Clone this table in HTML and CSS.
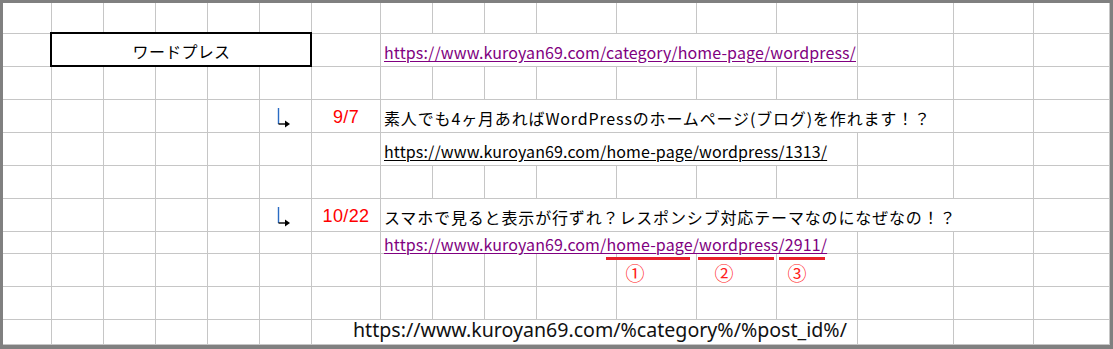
FILE: index.html
```html
<!DOCTYPE html>
<html lang="ja">
<head>
<meta charset="utf-8">
<title>ワードプレス</title>
<link rel="stylesheet" href="styles.css">
</head>
<body>
<div class="sheet">
  <div class="grid">
    <!-- row 1 -->
    <div class="c"></div><div class="c"></div><div class="c"></div><div class="c"></div><div class="c"></div><div class="c"></div><div class="c"></div><div class="c"></div><div class="c"></div><div class="c"></div><div class="c"></div><div class="c"></div><div class="c"></div><div class="c"></div><div class="c"></div><div class="c"></div><div class="c"></div>
    <!-- row 2 -->
    <div class="c"></div>
    <div class="c s5 box"><span>ワードプレス</span></div>
    <div class="c"></div>
    <div class="c s7 txt"><span class="url visited">https://www.kuroyan69.com/category/home-page/wordpress/</span></div>
    <div class="c"></div><div class="c"></div><div class="c"></div>
    <!-- row 3 -->
    <div class="c"></div><div class="c"></div><div class="c"></div><div class="c"></div><div class="c"></div><div class="c"></div><div class="c"></div><div class="c"></div><div class="c"></div><div class="c"></div><div class="c"></div><div class="c"></div><div class="c"></div><div class="c"></div><div class="c"></div><div class="c"></div><div class="c"></div>
    <!-- row 4 -->
    <div class="c"></div><div class="c"></div><div class="c"></div><div class="c"></div><div class="c"></div>
    <div class="c arrow"><svg width="16" height="20" viewBox="0 0 16 20"><path d="M1.5 0V16" stroke="#2a6cc4" stroke-width="1.4" fill="none"/><path d="M1.5 16H11" stroke="#000" stroke-width="1.4" fill="none"/><path d="M8 12.5L13 16L8 19.5Z" fill="#000"/></svg></div>
    <div class="c date">9/7</div>
    <div class="c s8 txt"><span class="jp">素人でも4ヶ月あればWordPressのホームページ(ブログ)を作れます！？</span></div>
    <div class="c"></div><div class="c"></div>
    <!-- row 5 -->
    <div class="c"></div><div class="c"></div><div class="c"></div><div class="c"></div><div class="c"></div><div class="c"></div><div class="c"></div>
    <div class="c s7 txt"><span class="url">https://www.kuroyan69.com/home-page/wordpress/1313/</span></div>
    <div class="c"></div><div class="c"></div><div class="c"></div>
    <!-- row 6 -->
    <div class="c"></div><div class="c"></div><div class="c"></div><div class="c"></div><div class="c"></div><div class="c"></div><div class="c"></div><div class="c"></div><div class="c"></div><div class="c"></div><div class="c"></div><div class="c"></div><div class="c"></div><div class="c"></div><div class="c"></div><div class="c"></div><div class="c"></div>
    <!-- row 7 -->
    <div class="c"></div><div class="c"></div><div class="c"></div><div class="c"></div><div class="c"></div>
    <div class="c arrow"><svg width="16" height="20" viewBox="0 0 16 20"><path d="M1.5 0V16" stroke="#2a6cc4" stroke-width="1.4" fill="none"/><path d="M1.5 16H11" stroke="#000" stroke-width="1.4" fill="none"/><path d="M8 12.5L13 16L8 19.5Z" fill="#000"/></svg></div>
    <div class="c date">10/22</div>
    <div class="c s9 txt"><span class="jp">スマホで見ると表示が行ずれ？レスポンシブ対応テーマなのになぜなの！？</span></div>
    <div class="c"></div>
    <!-- row 8 -->
    <div class="c"></div><div class="c"></div><div class="c"></div><div class="c"></div><div class="c"></div><div class="c"></div><div class="c"></div>
    <div class="c s7 txt"><span class="url visited">https://www.kuroyan69.com/home-page/wordpress/2911/</span></div>
    <div class="c"></div><div class="c"></div><div class="c"></div>
    <!-- row 9 -->
    <div class="c"></div><div class="c"></div><div class="c"></div><div class="c"></div><div class="c"></div><div class="c"></div><div class="c"></div><div class="c"></div><div class="c"></div><div class="c"></div><div class="c"></div><div class="c"></div><div class="c"></div><div class="c"></div><div class="c"></div><div class="c"></div><div class="c"></div>
    <!-- row 10 -->
    <div class="c"></div><div class="c"></div><div class="c"></div><div class="c"></div><div class="c"></div><div class="c"></div><div class="c"></div><div class="c"></div><div class="c"></div><div class="c"></div><div class="c"></div><div class="c"></div><div class="c"></div><div class="c"></div><div class="c"></div><div class="c"></div><div class="c"></div>
    <!-- row 11 -->
    <div class="c"></div><div class="c"></div><div class="c"></div><div class="c"></div><div class="c"></div><div class="c"></div>
    <div class="c s8 bottom"><span>https://www.kuroyan69.com/%category%/%post_id%/</span></div>
    <div class="c"></div><div class="c"></div><div class="c"></div>
  </div>

  <div class="mark bar1"></div>
  <div class="mark bar2"></div>
  <div class="mark bar3"></div>
  <div class="num n1">①</div>
  <div class="num n2">②</div>
  <div class="num n3">③</div>
  <div class="select-edge"></div>
</div>
</body>
</html>
```

FILE: styles.css
```css
* { box-sizing: border-box; }

html, body {
  margin: 0;
  padding: 0;
  background: #ffffff;
}

.sheet {
  position: relative;
  width: 1113px;
  height: 349px;
  border-style: solid;
  border-color: #808080;
  border-width: 3px 3px 4px 3px;
  overflow: hidden;
  font-family: "Noto Sans CJK JP", sans-serif;
  font-size: 16px;
  color: #000;
}

.grid {
  display: grid;
  grid-template-columns: 49px 52px 52px 52px 52px 52px 69px 52px 52px 52px 80px 80px 80px 81px 96px 80px 76px;
  grid-template-rows: 31px 33px 33px 33px 33px 33px 33px 22px 33px 33px 25px;
}

.c {
  border-right: 1px solid #c6c6c6;
  border-bottom: 1px solid #c6c6c6;
  min-width: 0;
  display: flex;
  align-items: center;
  white-space: nowrap;
}

.s5 { grid-column: span 5; }
.s7 { grid-column: span 7; }
.s8 { grid-column: span 8; }
.s9 { grid-column: span 9; }

.box {
  position: relative;
  justify-content: center;
  padding-top: 2px;
  letter-spacing: 0.3px;
}
.box::after {
  content: "";
  position: absolute;
  top: -2px;
  left: -2px;
  right: -1px;
  bottom: -1px;
  border: 2px solid #000;
}

.txt {
  padding-left: 3px;
  padding-top: 3px;
  overflow: visible;
}

.url {
  text-decoration: underline;
  text-underline-offset: 2px;
  color: #000;
  font-size: 16px;
  letter-spacing: 0.12px;
}
.url.visited { color: #800080; }

.jp {
  font-size: 16px;
  letter-spacing: 0.85px;
}

.arrow {
  padding-left: 17px;
  padding-top: 4px;
}
.arrow svg { display: block; }

.date {
  justify-content: center;
  color: #ff0000;
  font-family: "Liberation Sans", Arial, sans-serif;
  font-size: 18px;
  letter-spacing: 0.4px;
  padding-top: 2px;
}

.bottom {
  padding-left: 41px;
  padding-bottom: 6px;
  font-family: "Noto Sans", "Open Sans", sans-serif;
  font-size: 19.6px;
  color: #111;
}

.mark {
  position: absolute;
  top: 254px;
  height: 3px;
  background: #e8212b;
}
.bar1 { left: 603px; width: 84px; }
.bar2 { left: 695px; width: 76px; }
.bar3 { left: 776px; width: 46px; }

.num {
  position: absolute;
  top: 259px;
  width: 30px;
  text-align: center;
  line-height: 22px;
  font-size: 19px;
  color: #ff2020;
}
.n1 { left: 617px; }
.n2 { left: 706px; }
.n3 { left: 779px; }

.select-edge {
  position: absolute;
  right: -3px;
  top: 161px;
  width: 2px;
  height: 35px;
  background: #3da23a;
}
```
